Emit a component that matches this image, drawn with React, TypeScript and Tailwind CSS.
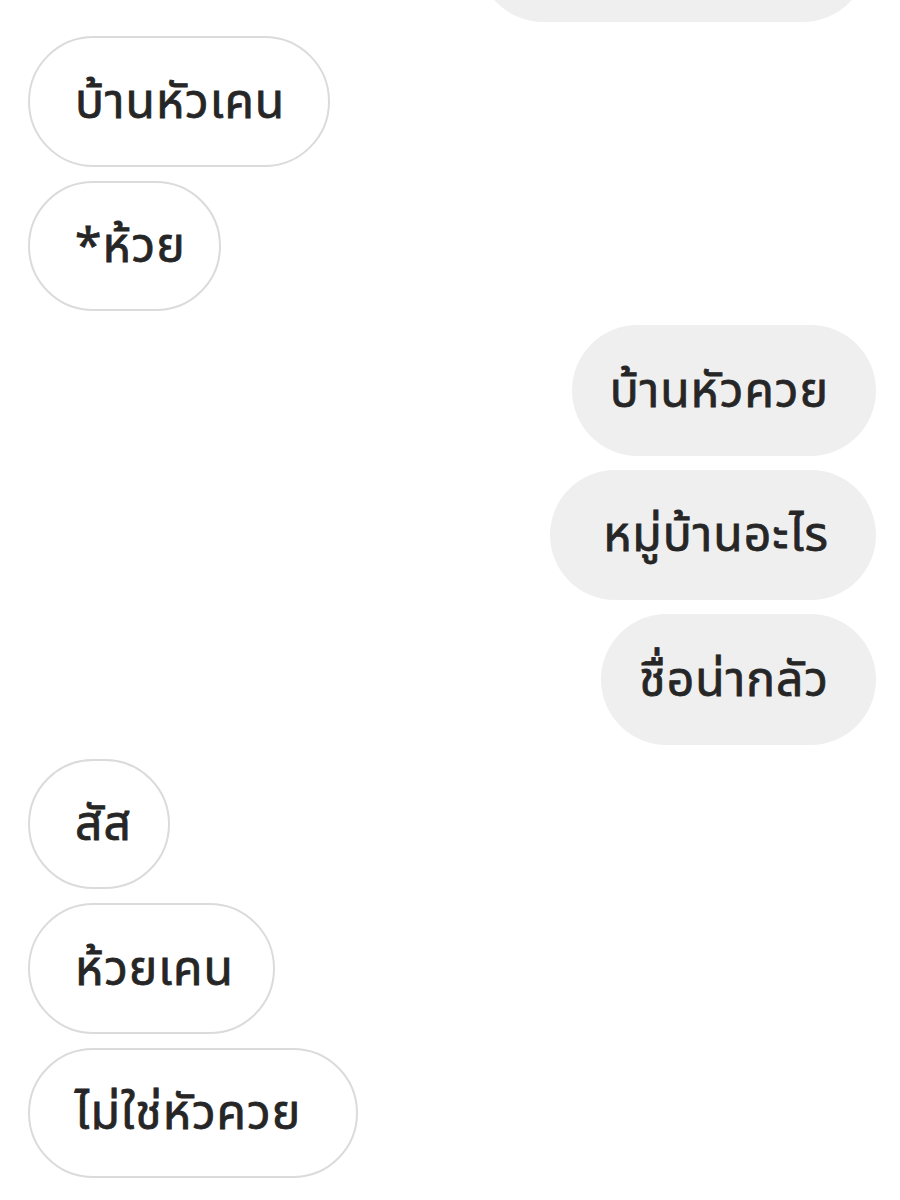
import React from "react";

type Msg = { text: string; mine: boolean; w: string };

const messages: Msg[] = [
  { text: "บ้านหัวเคน", mine: false, w: "w-[302px]" },
  { text: "*ห้วย", mine: false, w: "w-[193px]" },
  { text: "บ้านหัวควย", mine: true, w: "w-[304px]" },
  { text: "หมู่บ้านอะไร", mine: true, w: "w-[326px]" },
  { text: "ชื่อน่ากลัว", mine: true, w: "w-[275px]" },
  { text: "สัส", mine: false, w: "w-[142px]" },
  { text: "ห้วยเคน", mine: false, w: "w-[247px]" },
  { text: "ไม่ใช่หัวควย", mine: false, w: "w-[330px]" },
];

function Bubble({ text, mine, w }: Msg) {
  return (
    <div className={mine ? "flex justify-end pr-[24px]" : "flex justify-start pl-[28px]"}>
      <div
        className={
          mine
            ? `${w} h-[130.5px] rounded-full bg-[#efefef] pr-[47px] pt-[5px] flex items-center justify-end text-[#262626]`
            : `${w} h-[130.5px] rounded-full bg-white border-2 border-[#dbdbdb] pl-[45px] pt-[5px] flex items-center justify-start text-[#262626]`
        }
      >
        <span className="text-[48px] tracking-[1px] font-normal [-webkit-text-stroke:0.8px_#262626] leading-none whitespace-nowrap">
          {text}
        </span>
      </div>
    </div>
  );
}

export default function App() {
  return (
    <div
      className="w-[900px] h-[1200px] overflow-hidden bg-white"
      style={{ fontFamily: '"Noto Sans Thai", "Noto Sans", sans-serif' }}
    >
      <div className="flex flex-col gap-[14px] -mt-[108.5px]">
        {/* cut-off bubble from above */}
        <div className="flex justify-end pr-[32px]">
          <div className="h-[130.5px] w-[390px] rounded-full bg-[#efefef]" />
        </div>
        {messages.map((m, i) => (
          <Bubble key={i} text={m.text} mine={m.mine} w={m.w} />
        ))}
      </div>
    </div>
  );
}
